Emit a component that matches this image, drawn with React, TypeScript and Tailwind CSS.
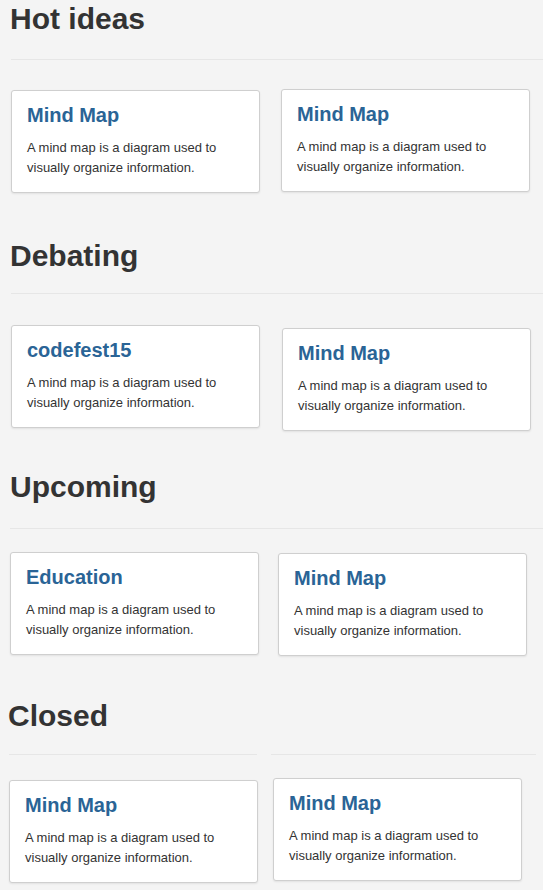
import React from 'react';

type CardData = { title: string; className: string };
type Section = {
  heading: string;
  headingClass: string;
  hr: React.ReactNode;
  rowClass: string;
  cards: CardData[];
};

const DESC = 'A mind map is a diagram used to visually organize information.';

const IdeaCard: React.FC<CardData> = ({ title, className }) => (
  <div
    className={`w-[249px] h-[103px] shrink-0 bg-white border border-[#cfcfcf] rounded-[3px] shadow-[0_1px_2px_rgba(0,0,0,0.08)] px-[15px] pt-[13px] ${className}`}
  >
    <h3 className="text-[20px] leading-[22px] font-bold text-[#2a6496]">{title}</h3>
    <p className="mt-[12px] w-[200px] text-[13px] leading-[20px] text-[#333]">{DESC}</p>
  </div>
);

const sections: Section[] = [
  {
    heading: 'Hot ideas',
    headingClass: 'mt-[2px] ml-[10px]',
    hr: <div className="mt-[24px] ml-[11px] h-px bg-[#e6e6e6]" />,
    rowClass: 'mt-[29px]',
    cards: [
      { title: 'Mind Map', className: 'ml-[11px] mt-[1px]' },
      { title: 'Mind Map', className: 'ml-[21px]' },
    ],
  },
  {
    heading: 'Debating',
    headingClass: 'mt-[46px] ml-[10px]',
    hr: <div className="mt-[21px] ml-[11px] h-px bg-[#e6e6e6]" />,
    rowClass: 'mt-[31px]',
    cards: [
      { title: 'codefest15', className: 'ml-[11px]' },
      { title: 'Mind Map', className: 'ml-[22px] mt-[3px]' },
    ],
  },
  {
    heading: 'Upcoming',
    headingClass: 'mt-[39px] ml-[10px]',
    hr: <div className="mt-[25px] ml-[10px] h-px bg-[#e6e6e6]" />,
    rowClass: 'mt-[23px]',
    cards: [
      { title: 'Education', className: 'ml-[10px]' },
      { title: 'Mind Map', className: 'ml-[19px] mt-[1px]' },
    ],
  },
  {
    heading: 'Closed',
    headingClass: 'mt-[43px] ml-[8px]',
    hr: (
      <div className="mt-[22px] flex h-px">
        <div className="ml-[9px] w-[248px] bg-[#e6e6e6]" />
        <div className="ml-[14px] w-[265px] bg-[#e6e6e6]" />
      </div>
    ),
    rowClass: 'mt-[23px]',
    cards: [
      { title: 'Mind Map', className: 'ml-[9px] mt-[2px]' },
      { title: 'Mind Map', className: 'ml-[15px]' },
    ],
  },
];

const App: React.FC = () => {
  return (
    <div className="min-h-[890px] w-[543px] overflow-hidden bg-[#f4f4f4] font-['Liberation_Sans',Arial,sans-serif] pb-[6px]">
      {sections.map((section) => (
        <section key={section.heading}>
          {/* Section header */}
          <h1 className={`text-[30px] leading-[33px] font-bold text-[#333] ${section.headingClass}`}>
            {section.heading}
          </h1>
          {section.hr}

          {/* Idea cards */}
          <div className={`flex items-start ${section.rowClass}`}>
            {section.cards.map((card, i) => (
              <IdeaCard key={i} title={card.title} className={card.className} />
            ))}
          </div>
        </section>
      ))}
    </div>
  );
};

export default App;
